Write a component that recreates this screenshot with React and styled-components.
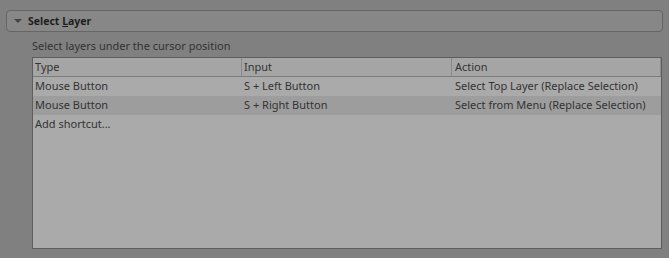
import React from "react";
import styled, { createGlobalStyle } from "styled-components";

const Global = createGlobalStyle`
  html, body {
    margin: 0;
    padding: 0;
    background: #808080;
  }
  body {
    font-family: "Noto Sans", "DejaVu Sans", sans-serif;
    font-size: 11px;
    color: #2a2a2a;
  }
`;

const Page = styled.div`
  width: 669px;
  height: 258px;
  box-sizing: border-box;
  padding: 10px 6px 9px 6px;
  display: flex;
  flex-direction: column;
`;

const Header = styled.div`
  height: 22px;
  box-sizing: border-box;
  border: 1px solid #666;
  border-radius: 4px;
  background: #878787;
  display: flex;
  align-items: center;
  padding-left: 7px;
  gap: 6px;
  font-weight: bold;
  font-size: 10.5px;
  color: #1e1e1e;
`;

const Arrow = styled.span`
  width: 0;
  height: 0;
  border-left: 4px solid transparent;
  border-right: 4px solid transparent;
  border-top: 4px solid #444;
`;

const Body = styled.div`
  flex: 1;
  display: flex;
  flex-direction: column;
  padding: 5px 1px 0 26px;
`;

const Desc = styled.div`
  height: 17px;
  line-height: 17px;
  color: #333;
`;

const Table = styled.div`
  flex: 1;
  margin-top: 3px;
  background: #aaaaaa;
  border: 1px solid #5e5e5e;
  display: flex;
  flex-direction: column;
`;

const Row = styled.div`
  display: grid;
  grid-template-columns: 209px 210px 1fr;
  height: ${(p) => (p.$head ? "18px" : "19px")};
  background: ${(p) => (p.$alt ? "#9d9d9d" : p.$head ? "#a5a5a5" : "#aaaaaa")};
  border-bottom: ${(p) => (p.$head ? "1px solid #7c7c7c" : "none")};
`;

const Cell = styled.div`
  padding-left: ${(p) => (p.$last ? "3px" : "2px")};
  line-height: ${(p) => (p.$head ? "17px" : "18px")};
  white-space: nowrap;
  color: #333;
  border-right: ${(p) => (p.$head ? "1px solid #8a8a8a" : "none")};
`;

const rows = [
  ["Mouse Button", "S + Left Button", "Select Top Layer (Replace Selection)"],
  ["Mouse Button", "S + Right Button", "Select from Menu (Replace Selection)"],
];

export default function App() {
  return (
    <>
      <Global />
      <Page>
        <Header>
          <Arrow />
          <span>
            Select <u>L</u>ayer
          </span>
        </Header>
        <Body>
          <Desc>Select layers under the cursor position</Desc>
          <Table>
            <Row $head>
              <Cell $head>Type</Cell>
              <Cell $head>Input</Cell>
              <Cell $head $last>
                Action
              </Cell>
            </Row>
            {rows.map((r, i) => (
              <Row key={i} $alt={i % 2 === 1}>
                {r.map((c, j) => (
                  <Cell key={j} $last={j === 2}>
                    {c}
                  </Cell>
                ))}
              </Row>
            ))}
            <Row>
              <Cell>Add shortcut...</Cell>
            </Row>
          </Table>
        </Body>
      </Page>
    </>
  );
}
